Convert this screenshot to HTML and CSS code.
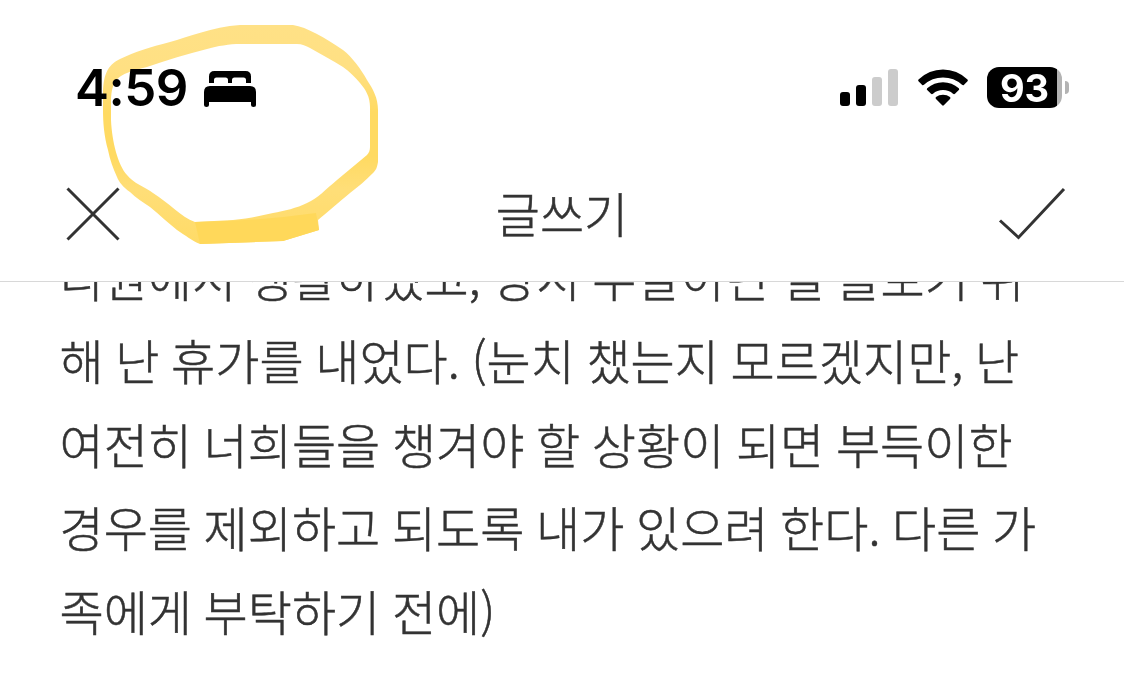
FILE: index.html
```html
<!DOCTYPE html>
<html lang="ko">
<head>
<meta charset="utf-8">
<title>글쓰기</title>
<link rel="stylesheet" href="styles.css">
</head>
<body>

<div class="statusbar">
    <div class="clock">
        <span class="time">4:59</span>
        <svg class="bed" width="52" height="36" viewBox="0 0 52 36">
            <path d="M5 12V5.500Q5 0 10.500 0H41.500Q47 0 47 5.500V12H42V9Q42 6.500 39.500 6.500H30.500Q28 6.500 28 9V12H24V9Q24 6.500 21.500 6.500H12.500Q10 6.500 10 9V12Z"/>
            <path d="M0 34V21Q0 15 6 15H46Q52 15 52 21V34Q52 36 49.500 36Q47 36 47 34V31H5V34Q5 36 2.500 36Q0 36 0 34Z"/>
        </svg>
    </div>
    <div class="indicators">
        <div class="signal">
            <span class="bar bar1"></span>
            <span class="bar bar2"></span>
            <span class="bar bar3 off"></span>
            <span class="bar bar4 off"></span>
        </div>
        <svg class="wifi" width="52" height="38" viewBox="0 0 52 38">
            <path d="M1.500 10.500Q12 0.500 26 0.500T50.500 10.500Q51.300 11.500 50.500 12.300L46.800 16Q46 16.600 45 15.800Q37 8.500 26 8.500T7 15.800Q6 16.600 5.200 16L1.500 12.300Q0.700 11.500 1.500 10.500Z"/>
            <path d="M10.200 19.200Q17 13.200 26 13.200T41.800 19.200Q42.700 20.200 41.800 21L38 24.800Q37 25.500 36 24.700Q32 21 26 21T16 24.700Q15 25.500 14 24.800L10.200 21Q9.300 20.200 10.200 19.200Z"/>
            <path d="M19 28Q22 25.700 26 25.700T33 28Q34 29 33 30L26.800 36.300Q26 37 25.200 36.300L19 30Q18 29 19 28Z"/>
        </svg>
        <div class="battery"><span class="level">93</span></div>
        <span class="cap"></span>
    </div>
</div>

<div class="header">
    <svg class="icon" width="56" height="56" viewBox="0 0 56 56">
        <path d="M2.500 2.500L53.500 53.500M53.500 2.500L2.500 53.500"/>
    </svg>
    <h1>글쓰기</h1>
    <svg class="icon" width="68" height="56" viewBox="0 0 68 56">
        <path d="M2 34.500L20.500 51.500L66 3"/>
    </svg>
</div>

<div class="content">
    <p>리원에서 생활하였고, 당시 주말이던 널 돌보기 위</p>
    <p>해 난 휴가를 내었다. (눈치 챘는지 모르겠지만, 난</p>
    <p>여전히 너희들을 챙겨야 할 상황이 되면 부득이한</p>
    <p>경우를 제외하고 되도록 내가 있으려 한다. 다른 가</p>
    <p>족에게 부탁하기 전에)</p>
</div>

<!-- highlighter circle around the clock -->
<svg class="marker" width="1124" height="282" viewBox="0 0 1124 282">
    <defs>
        <linearGradient id="ink" x1="0" y1="0" x2="0" y2="1">
            <stop offset="0" stop-color="#ffe186"/>
            <stop offset="0.200" stop-color="#ffe083"/>
            <stop offset="0.400" stop-color="#ffda62"/>
            <stop offset="0.600" stop-color="#ffda62"/>
            <stop offset="0.750" stop-color="#ffde78"/>
            <stop offset="1" stop-color="#ffdb67"/>
        </linearGradient>
    </defs>
    <path fill="url(#ink)" fill-rule="evenodd" d="M103 95C103 76 107 65 120 59C135 52 150 47 170 42C188 37 212 27 240 25H293C307 27 325 38 343 50C352 57 361 69 367 80C373 89 378 98 378 110V162C377 168 376 170 373 173C366 180 358 187 350 193C340 201 328 212 318 220L319 230L283 241L200 244C192 241 185 235 177 230C168 223 160 215 150 207C143 202 136 198 130 192C123 187 119 182 117 177C113 168 110 160 108 150C104 136 103 122 103 110ZM111 103C111 84 116 77 127 73C134 70 140 69 147 67C167 60 187 54 207 49C217 46 230 44 240 44H297C302 44 306 46 310 48C321 54 333 61 343 67C350 72 355 77 360 83C366 90 370 97 370 107V147C370 150 369 153 367 155C357 163 347 172 337 180C325 190 318 198 307 203C297 208 284 211 273 213C260 216 247 219 233 220L195 222C181 217 168 202 153 193C145 187 133 183 127 175C118 165 112 142 111 120Z"/>
    <path fill="#ffd85a" d="M195 222Q260 221 316 213L319 230L283 241L200 244Z"/>
</svg>

</body>
</html>
```
FILE: styles.css
```css
* {
    box-sizing: border-box;
}

body {
    margin: 0;
    height: 696px;
    overflow: hidden;
    background-color: #fff;
    color: #333;
    font-family: "Noto Sans CJK KR", sans-serif;
}

/* Status bar */
.statusbar {
    display: flex;
    justify-content: space-between;
    height: 150px;
    padding: 66px 55px 0 75px;
    color: #000;
}

.clock, .indicators, .signal {
    display: flex;
}

.time {
    width: 129px;
    font-family: Inter, sans-serif;
    font-size: 51px;
    font-weight: 600;
    line-height: 44px;
    letter-spacing: -0.500px;
}

.bed {
    margin-top: 5px;
}

.signal {
    align-items: flex-end;
    height: 40px;
    gap: 6px;
}

.bar {
    width: 10px;
    border-radius: 3px;
    background-color: #000;
}

.bar1 {
    height: 14px;
}

.bar2 {
    height: 21px;
}

.bar3 {
    height: 29px;
}

.bar4 {
    height: 37px;
}

.off {
    background-color: #ccc;
}

.wifi {
    margin: 3px 18px 0 19px;
}

.battery {
    width: 75px;
    height: 41px;
    margin-top: 1px;
    border-radius: 12px;
    background: linear-gradient(to right, #000 70px, #b3b3b3 70px);
    color: #fff;
}

.level {
    display: block;
    font-family: Inter, sans-serif;
    font-size: 38px;
    font-weight: 700;
    line-height: 42px;
    text-align: center;
}

.cap {
    width: 4px;
    height: 13px;
    margin: 15px 0 0 3px;
    border-radius: 0 4px 4px 0;
    background-color: #b3b3b3;
}

/* Title row */
.header {
    display: flex;
    justify-content: space-between;
    align-items: center;
    height: 132px;
    padding: 0 58px 3px 65px;
    border-bottom: 1px solid #d8d8d8;
}

.header h1 {
    margin: -5px 0 0 5px;
    font-size: 48px;
    font-weight: 300;
    line-height: 60px;
    -webkit-text-stroke: 0.500px #333;
}

.icon {
    fill: none;
    stroke: #333;
    stroke-width: 3;
}

/* Post text, scrolled so the first line is half hidden */
.content {
    height: 414px;
    padding-left: 59.500px;
    overflow: hidden;
}

.content p {
    height: 83.500px;
    margin: 0;
    font-size: 48px;
    font-weight: 300;
    line-height: 83.500px;
    word-spacing: -1.800px;
    white-space: nowrap;
    -webkit-text-stroke: 0.500px #333;
}

.content p:first-child {
    margin-top: -47.500px;
}

.marker {
    position: absolute;
    top: 0;
    left: 0;
    mix-blend-mode: multiply;
    filter: blur(0.600px);
}
```
